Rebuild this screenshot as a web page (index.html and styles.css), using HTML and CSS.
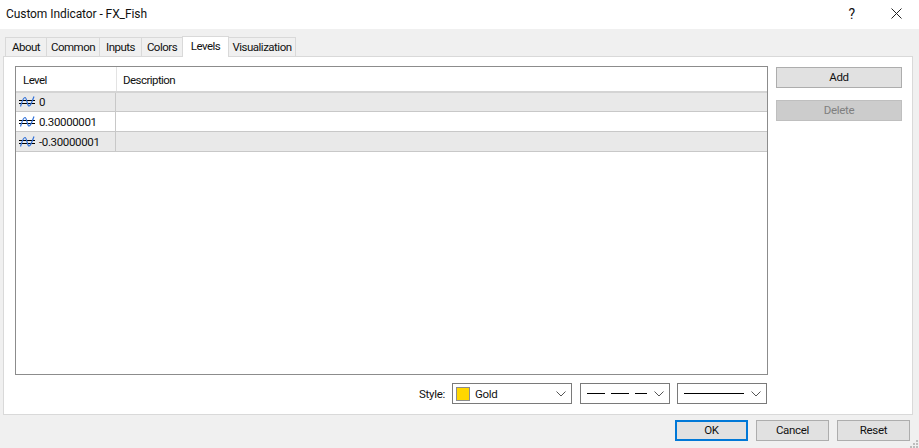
FILE: index.html
```html
<!DOCTYPE html>
<html lang="en">
<head>
<meta charset="utf-8">
<title>Custom Indicator - FX_Fish</title>
<link rel="stylesheet" href="styles.css">
</head>
<body>
<div class="window">
  <header class="titlebar">
    <span class="title">Custom Indicator - FX_Fish</span>
    <span class="help">?</span>
    <svg class="close" width="11" height="11" viewBox="0 0 11 11"><path d="M.5.5l10 10M10.500.5l-10 10" stroke="#222" fill="none"/></svg>
  </header>
  <nav class="tabs">
    <span class="tab t-about">About</span>
    <span class="tab t-common">Common</span>
    <span class="tab t-inputs">Inputs</span>
    <span class="tab t-colors">Colors</span>
    <span class="tab active t-levels">Levels</span>
    <span class="tab t-vis">Visualization</span>
  </nav>
  <main class="panel">
    <div class="top">
      <section class="table">
        <div class="thead">
          <span class="th col1">Level</span>
          <span class="th col2">Description</span>
        </div>
        <div class="row first grey">
          <span class="cell col1"><svg class="lvl" width="17" height="12" viewBox="0 0 17 12"><path d="M0 4.500h16M0 7.500h16" stroke="#000" fill="none"/><path d="M1.500 10.500C3 6 4 1.500 6 1.500S8 10 10 10s3-5 5-9.500" stroke="#2f6fd8" stroke-width="1.200" fill="none"/></svg><span class="num">0</span></span>
          <span class="cell"></span>
        </div>
        <div class="row">
          <span class="cell col1"><svg class="lvl" width="17" height="12" viewBox="0 0 17 12"><path d="M0 4.500h16M0 7.500h16" stroke="#000" fill="none"/><path d="M1.500 10.500C3 6 4 1.500 6 1.500S8 10 10 10s3-5 5-9.500" stroke="#2f6fd8" stroke-width="1.200" fill="none"/></svg><span class="num">0.30000001</span></span>
          <span class="cell"></span>
        </div>
        <div class="row grey">
          <span class="cell col1"><svg class="lvl" width="17" height="12" viewBox="0 0 17 12"><path d="M0 4.500h16M0 7.500h16" stroke="#000" fill="none"/><path d="M1.500 10.500C3 6 4 1.500 6 1.500S8 10 10 10s3-5 5-9.500" stroke="#2f6fd8" stroke-width="1.200" fill="none"/></svg><span class="num">-0.30000001</span></span>
          <span class="cell"></span>
        </div>
      </section>
      <aside class="side">
        <button class="btn side-btn">Add</button>
        <button class="btn side-btn disabled">Delete</button>
      </aside>
    </div>
    <div class="style-row">
      <span class="style-label">Style:</span>
      <div class="select s-color">
        <span class="swatch"></span><span>Gold</span>
        <svg class="chev" width="10" height="6" viewBox="0 0 10 6"><path d="M.5.5L5 5 9.500.5" stroke="#555" fill="none"/></svg>
      </div>
      <div class="select s-dash">
        <svg class="line" width="60" height="1"><path d="M0 .5h18M24 .5h18M48 .5h12" stroke="#000"/></svg>
        <svg class="chev" width="10" height="6" viewBox="0 0 10 6"><path d="M.5.5L5 5 9.500.5" stroke="#555" fill="none"/></svg>
      </div>
      <div class="select s-solid">
        <svg class="line" width="60" height="1"><path d="M0 .5h60" stroke="#000"/></svg>
        <svg class="chev" width="10" height="6" viewBox="0 0 10 6"><path d="M.5.5L5 5 9.500.5" stroke="#555" fill="none"/></svg>
      </div>
    </div>
  </main>
  <footer class="footer">
    <button class="btn foot-btn default">OK</button>
    <button class="btn foot-btn">Cancel</button>
    <button class="btn foot-btn">Reset</button>
  </footer>
  <svg class="grip" width="8" height="8" viewBox="0 0 8 8"><path d="M6 0h2v2H6zM3 3h2v2H3zM6 3h2v2H6zM0 6h2v2H0zM3 6h2v2H3zM6 6h2v2H6z" fill="#bdbdbd"/></svg>
</div>
</body>
</html>
```
FILE: styles.css
```css
* { box-sizing: border-box; }
html, body { margin: 0; height: 100%; }
body { font: 12px Roboto, "Open Sans", sans-serif; color: #111; background: #f0f0f0; overflow: hidden; }
.window { width: 919px; height: 448px; display: flex; flex-direction: column; position: relative; }
.titlebar { height: 29px; background: #fff; display: flex; align-items: center; padding: 0 17px 2px 6px; flex: none; }
.title { flex: 1; letter-spacing: -.08px; }
.help { margin-right: 36px; font-size: 14px; }
.tabs { height: 27px; display: flex; align-items: flex-end; padding-left: 5px; flex: none; position: relative; z-index: 1; }
.tab { height: 19px; background: #f0f0f0; border: 1px solid #d9d9d9; border-bottom: 0; display: flex; align-items: center; justify-content: center; font-size: 11.5px; letter-spacing: -.5px; margin-left: -1px; }
.tab:first-child { margin-left: 0; }
.active { height: 21px; background: #fff; margin-bottom: -1px; padding-bottom: 2px; position: relative; }
.t-about { width: 42px; }
.t-common { width: 54px; }
.t-inputs { width: 43px; }
.t-colors { width: 42px; }
.t-levels { width: 47px; }
.t-vis { width: 68px; }
.panel { width: 910px; height: 359px; margin-left: 3px; background: #fff; border: 1px solid #d9d9d9; padding: 9px 10px 0 11px; flex: none; display: flex; flex-direction: column; }
.top { display: flex; gap: 8px; height: 309px; }
.table { width: 753px; height: 309px; border: 1px solid #8c8c8c; display: flex; flex-direction: column; }
.thead { height: 26px; display: flex; border-bottom: 2px solid #d4d4d4; }
.th { display: flex; align-items: center; padding: 1px 0 0 7px; font-size: 11.5px; letter-spacing: -.55px; }
.thead .col2 { padding-left: 6px; }
.thead .col1 { width: 101px; border-right: 1px solid #e3e3e3; }
.row { height: 20px; display: flex; border-bottom: 1px solid #c8c8c8; }
.first { height: 19px; }
.grey { background: #e9e9e9; }
.cell { flex: 1; display: flex; align-items: center; font-size: 11.5px; }
.num { letter-spacing: -.35px; }
.row .col1 { flex: none; width: 100px; border-right: 1px solid #c8c8c8; padding-left: 3px; }
.lvl { margin-right: 3px; }
.side { display: flex; flex-direction: column; gap: 12px; padding-top: 1px; }
.btn { font: inherit; font-size: 11.5px; letter-spacing: -.3px; color: #111; height: 21px; padding: 0 0 1px; background: #e1e1e1; border: 1px solid #adadad; }
.side-btn { width: 126px; }
.disabled { background: #cccccc; border-color: #bfbfbf; color: #7f7f7f; }
.style-row { display: flex; align-items: center; height: 21px; margin-top: 8px; margin-right: 135px; justify-content: flex-end; }
.style-label { font-size: 11.5px; letter-spacing: -.3px; margin-right: 7px; }
.select { height: 21px; border: 1px solid #7a7a7a; background: #fff; display: flex; align-items: center; position: relative; font-size: 11.5px; letter-spacing: -.3px; }
.s-color { width: 120px; padding-left: 3px; margin-right: 8px; }
.s-dash { width: 90px; padding-left: 6px; margin-right: 7px; }
.s-solid { width: 90px; padding-left: 6px; }
.swatch { width: 14px; height: 14px; background: #ffd700; border: 1px solid #8c8c8c; margin-right: 5px; }
.chev { position: absolute; right: 5px; top: 7px; }
.footer { display: flex; justify-content: flex-end; gap: 8px; padding: 5px 9px 0 0; }
.foot-btn { width: 73px; }
.default { border: 2px solid #0078d7; }
.grip { position: absolute; right: 1px; bottom: 0; }
```
